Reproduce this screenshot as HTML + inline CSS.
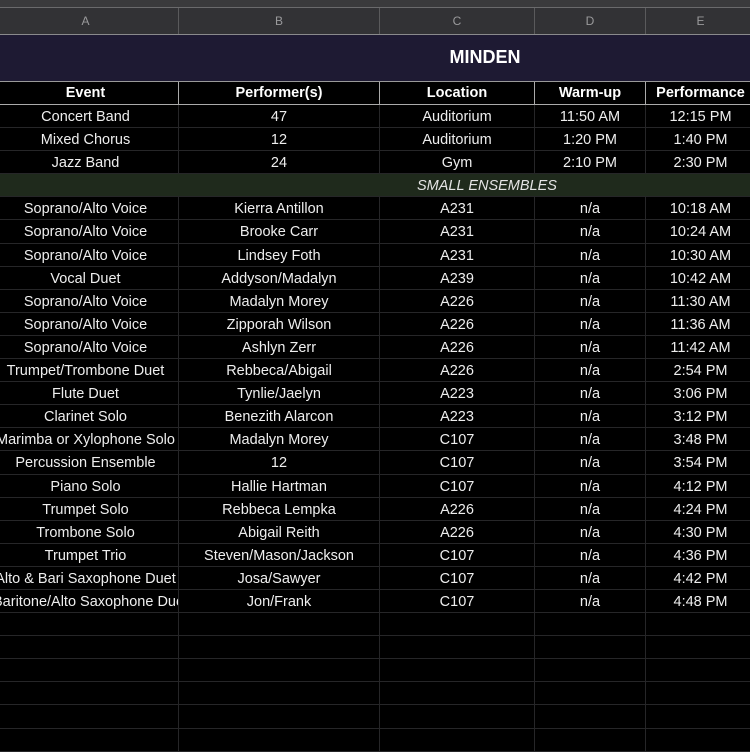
<!DOCTYPE html>
<html><head><meta charset="utf-8"><style>
*{margin:0;padding:0;box-sizing:border-box}
body{width:750px;height:750px;overflow:hidden;background:#000;font-family:"Liberation Sans",sans-serif;position:relative}
.top{position:absolute;left:0;top:0;width:750px;height:8px;background:#3a3a3c;border-bottom:1px solid #6a6a6c}
.ch{position:absolute;left:-7px;top:8px;width:770px;height:27px;background:#323235;border-bottom:1px solid #8a8a8c;display:flex}
.ch div{flex-shrink:0;color:#9a9a9c;font-size:12px;text-align:center;line-height:26px;border-right:1px solid #5a5a5c}
.title{position:absolute;left:0;top:35px;width:750px;height:47px;background:#1e1a33;border-bottom:1px solid #999}
.title span{position:absolute;left:485px;top:12px;transform:translateX(-50%);color:#fff;font-weight:bold;font-size:18px}
.r{display:flex;height:23.1px;border-bottom:1px solid #262628}
.r div{flex-shrink:0;color:#eee;font-size:14.5px;text-align:center;line-height:24px;border-right:1px solid #262628;white-space:nowrap;overflow:hidden}
.w1{width:186px}.w2{width:201px}.w3{width:155px}.w4{width:111px}.w5{width:110px}
#rows{position:absolute;left:-7px;top:82px;width:770px}
.h{height:23px;border-bottom:1px solid #aaa}
.h div{font-weight:bold;color:#fff;border-right:1px solid #aaa;line-height:23px}
.g{background:#1f2a1c}
.g div{border-right:none}
</style></head><body>
<div class="top"></div>
<div class="ch"><div class="w1">A</div><div class="w2">B</div><div class="w3">C</div><div class="w4">D</div><div class="w5">E</div></div>
<div class="title"><span>MINDEN</span></div>
<div id="rows">
<div class="r h"><div class="w1">Event</div><div class="w2">Performer(s)</div><div class="w3">Location</div><div class="w4">Warm-up</div><div class="w5">Performance</div></div>
<div class="r"><div class="w1">Concert Band</div><div class="w2">47</div><div class="w3">Auditorium</div><div class="w4">11:50 AM</div><div class="w5">12:15 PM</div></div>
<div class="r"><div class="w1">Mixed Chorus</div><div class="w2">12</div><div class="w3">Auditorium</div><div class="w4">1:20 PM</div><div class="w5">1:40 PM</div></div>
<div class="r"><div class="w1">Jazz Band</div><div class="w2">24</div><div class="w3">Gym</div><div class="w4">2:10 PM</div><div class="w5">2:30 PM</div></div>
<div class="r g"><div style="width:770px;padding-left:424px;text-align:left;font-style:italic;color:#e4e4e4">SMALL ENSEMBLES</div></div>
<div class="r"><div class="w1">Soprano/Alto Voice</div><div class="w2">Kierra Antillon</div><div class="w3">A231</div><div class="w4">n/a</div><div class="w5">10:18 AM</div></div>
<div class="r"><div class="w1">Soprano/Alto Voice</div><div class="w2">Brooke Carr</div><div class="w3">A231</div><div class="w4">n/a</div><div class="w5">10:24 AM</div></div>
<div class="r"><div class="w1">Soprano/Alto Voice</div><div class="w2">Lindsey Foth</div><div class="w3">A231</div><div class="w4">n/a</div><div class="w5">10:30 AM</div></div>
<div class="r"><div class="w1">Vocal Duet</div><div class="w2">Addyson/Madalyn</div><div class="w3">A239</div><div class="w4">n/a</div><div class="w5">10:42 AM</div></div>
<div class="r"><div class="w1">Soprano/Alto Voice</div><div class="w2">Madalyn Morey</div><div class="w3">A226</div><div class="w4">n/a</div><div class="w5">11:30 AM</div></div>
<div class="r"><div class="w1">Soprano/Alto Voice</div><div class="w2">Zipporah Wilson</div><div class="w3">A226</div><div class="w4">n/a</div><div class="w5">11:36 AM</div></div>
<div class="r"><div class="w1">Soprano/Alto Voice</div><div class="w2">Ashlyn Zerr</div><div class="w3">A226</div><div class="w4">n/a</div><div class="w5">11:42 AM</div></div>
<div class="r"><div class="w1">Trumpet/Trombone Duet</div><div class="w2">Rebbeca/Abigail</div><div class="w3">A226</div><div class="w4">n/a</div><div class="w5">2:54 PM</div></div>
<div class="r"><div class="w1">Flute Duet</div><div class="w2">Tynlie/Jaelyn</div><div class="w3">A223</div><div class="w4">n/a</div><div class="w5">3:06 PM</div></div>
<div class="r"><div class="w1">Clarinet Solo</div><div class="w2">Benezith Alarcon</div><div class="w3">A223</div><div class="w4">n/a</div><div class="w5">3:12 PM</div></div>
<div class="r"><div class="w1">Marimba or Xylophone Solo</div><div class="w2">Madalyn Morey</div><div class="w3">C107</div><div class="w4">n/a</div><div class="w5">3:48 PM</div></div>
<div class="r"><div class="w1">Percussion Ensemble</div><div class="w2">12</div><div class="w3">C107</div><div class="w4">n/a</div><div class="w5">3:54 PM</div></div>
<div class="r"><div class="w1">Piano Solo</div><div class="w2">Hallie Hartman</div><div class="w3">C107</div><div class="w4">n/a</div><div class="w5">4:12 PM</div></div>
<div class="r"><div class="w1">Trumpet Solo</div><div class="w2">Rebbeca Lempka</div><div class="w3">A226</div><div class="w4">n/a</div><div class="w5">4:24 PM</div></div>
<div class="r"><div class="w1">Trombone Solo</div><div class="w2">Abigail Reith</div><div class="w3">A226</div><div class="w4">n/a</div><div class="w5">4:30 PM</div></div>
<div class="r"><div class="w1">Trumpet Trio</div><div class="w2">Steven/Mason/Jackson</div><div class="w3">C107</div><div class="w4">n/a</div><div class="w5">4:36 PM</div></div>
<div class="r"><div class="w1">Alto &amp; Bari Saxophone Duet</div><div class="w2">Josa/Sawyer</div><div class="w3">C107</div><div class="w4">n/a</div><div class="w5">4:42 PM</div></div>
<div class="r"><div class="w1">Baritone/Alto Saxophone Duet</div><div class="w2">Jon/Frank</div><div class="w3">C107</div><div class="w4">n/a</div><div class="w5">4:48 PM</div></div>
<div class="r"><div class="w1"></div><div class="w2"></div><div class="w3"></div><div class="w4"></div><div class="w5"></div></div>
<div class="r"><div class="w1"></div><div class="w2"></div><div class="w3"></div><div class="w4"></div><div class="w5"></div></div>
<div class="r"><div class="w1"></div><div class="w2"></div><div class="w3"></div><div class="w4"></div><div class="w5"></div></div>
<div class="r"><div class="w1"></div><div class="w2"></div><div class="w3"></div><div class="w4"></div><div class="w5"></div></div>
<div class="r"><div class="w1"></div><div class="w2"></div><div class="w3"></div><div class="w4"></div><div class="w5"></div></div>
<div class="r"><div class="w1"></div><div class="w2"></div><div class="w3"></div><div class="w4"></div><div class="w5"></div></div>
</div>
</body></html>
